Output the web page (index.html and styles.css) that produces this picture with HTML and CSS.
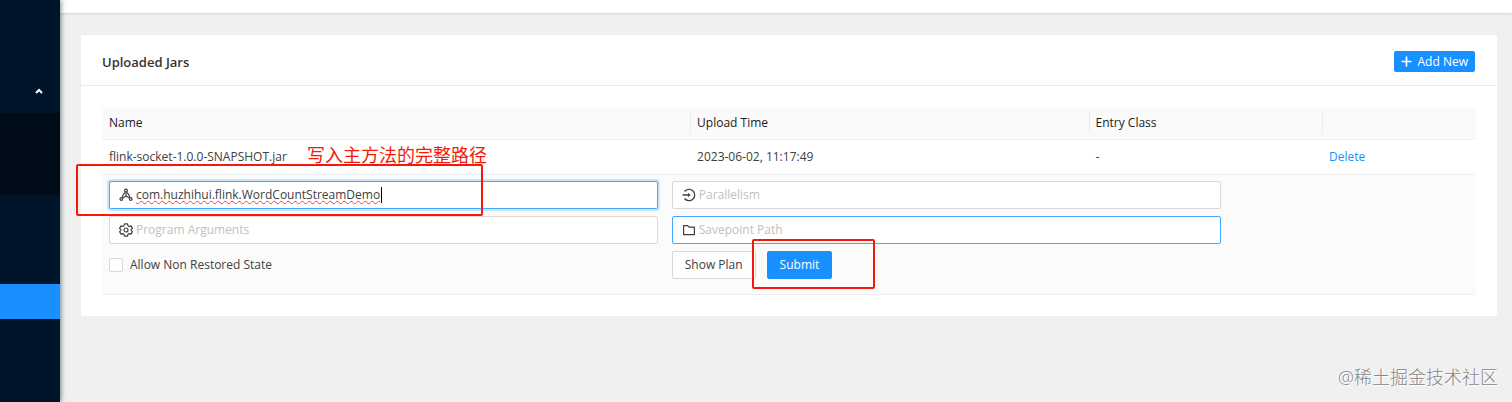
FILE: index.html
```html
<!DOCTYPE html>
<html lang="en">
<head>
    <meta charset="UTF-8">
    <meta name="viewport" content="width=device-width, initial-scale=1.0">
    <title>Uploaded Jars</title>
    <link rel="stylesheet" href="styles.css">
</head>
<body>
    <nav class="sidebar" aria-label="Main menu">
        <div class="menu-head">
            <button class="menu-toggle" type="button" aria-label="Toggle jobs" aria-expanded="true">
                <svg width="8" height="6" viewBox="0 0 8 6"><path d="M1 5l3-3 3 3" fill="none" stroke="currentColor" stroke-width="2"/></svg>
            </button>
        </div>
        <div class="submenu"></div>
        <div class="menu-gap"></div>
        <a class="menu-item active" href="#" aria-label="Submit new job"></a>
    </nav>

    <div class="main">
        <header class="topbar"></header>

        <main class="card">
            <div class="card-head">
                <h1>Uploaded Jars</h1>
                <button class="btn btn-primary btn-small" type="button">
                    <svg width="11" height="11" viewBox="0 0 11 11"><path d="M5.500 0.500v10M0.500 5.500h10" stroke="currentColor" stroke-width="1.700"/></svg>
                    Add New
                </button>
            </div>

            <div class="card-body">
                <table class="jar-table">
                    <colgroup>
                        <col class="col-name">
                        <col class="col-time">
                        <col class="col-entry">
                        <col class="col-action">
                    </colgroup>
                    <thead>
                        <tr>
                            <th>Name</th>
                            <th>Upload Time</th>
                            <th>Entry Class</th>
                            <th></th>
                        </tr>
                    </thead>
                    <tbody>
                        <tr>
                            <td>flink-socket-1.0.0-SNAPSHOT.jar</td>
                            <td>2023-06-02, 11:17:49</td>
                            <td>-</td>
                            <td><a href="#">Delete</a></td>
                        </tr>
                        <tr class="expanded">
                            <td colspan="4">
                                <form class="job-form">
                                    <label class="field focused">
                                        <svg width="14" height="14" viewBox="0 0 14 14" fill="none" stroke="currentColor" stroke-width="1.200"><circle cx="7" cy="2.500" r="1.400"/><circle cx="2.300" cy="11" r="1.300"/><circle cx="11.700" cy="11" r="1.300"/><path d="M7 4v4M7 8l-3.600 2.200M7 8l3.600 2.200M6 4.500C4.800 5.500 3.800 7 3.300 9M8 4.500c1.200 1 2.200 2.500 2.700 4.500"/></svg>
                                        <input class="misspelled" type="text" aria-label="Entry Class" value="com.huzhihui.flink.WordCountStreamDemo" spellcheck="false">
                                        <span class="caret"></span>
                                    </label>
                                    <label class="field">
                                        <svg width="14" height="14" viewBox="0 0 14 14" fill="none" stroke="currentColor" stroke-width="1.300"><path d="M2.500 3.500A5.700 5.700 0 1 1 2.500 10.500M0.500 7h6"/><path d="M6 5l2.800 2L6 9z" fill="currentColor" stroke="none"/></svg>
                                        <input type="text" aria-label="Parallelism" placeholder="Parallelism">
                                    </label>
                                    <label class="field">
                                        <svg width="14" height="14" viewBox="0 0 14 14" fill="none" stroke="currentColor" stroke-width="1.200" stroke-linejoin="round"><path d="M5.500 0.900h3l.5 1.800 1.200.7 1.800-.5 1.400 2.500-1.300 1.300v.6l1.300 1.300-1.400 2.500-1.800-.5-1.200.7-.5 1.800h-3L5 11.300l-1.200-.7-1.800.5L.6 8.600l1.300-1.300v-.6L.6 5.400 2 2.900l1.800.5L5 2.700z"/><circle cx="7" cy="7" r="2"/></svg>
                                        <input type="text" aria-label="Program Arguments" placeholder="Program Arguments">
                                    </label>
                                    <label class="field hovered">
                                        <svg width="14" height="14" viewBox="0 0 14 14" fill="none" stroke="currentColor" stroke-width="1.200"><path d="M1.600 2.600h4l1.600 1.600h5.200v7.500H1.600z"/></svg>
                                        <input type="text" aria-label="Savepoint Path" placeholder="Savepoint Path">
                                    </label>
                                    <label class="check">
                                        <input type="checkbox">
                                        Allow Non Restored State
                                    </label>
                                    <div class="actions">
                                        <button class="btn" type="button">Show Plan</button>
                                        <button class="btn btn-primary" type="submit">Submit</button>
                                    </div>
                                </form>
                            </td>
                        </tr>
                    </tbody>
                </table>
            </div>
        </main>
    </div>

    <!-- Notes drawn over the page -->
    <div class="mark mark-entry"></div>
    <div class="mark mark-submit"></div>
    <div class="note" lang="zh">写入主方法的完整路径</div>
    <div class="watermark" lang="zh">@稀土掘金技术社区</div>
</body>
</html>
```

FILE: styles.css
```css
* {
    box-sizing: border-box;
}

body {
    margin: 0;
    min-height: 100vh;
    display: flex;
    position: relative;
    background-color: #f0f0f0;
    color: #404040;
    font-family: "Open Sans", "Noto Sans CJK SC", sans-serif;
    font-size: 12px;
    line-height: 20px;
}

/* Sidebar */
.sidebar {
    width: 60px;
    flex: none;
    background-color: #001529;
    box-shadow: 1px 0 5px rgba(0, 21, 41, 0.5);
    z-index: 1;
}

.menu-head {
    height: 113px;
    padding: 72px 13px 0 0;
    text-align: right;
}

.menu-toggle {
    width: 16px;
    height: 35px;
    padding: 0;
    border: none;
    background: none;
    color: #fff;
}

.submenu {
    height: 82px;
    background-color: #000c17;
}

.menu-gap {
    height: 89px;
}

.menu-item {
    display: block;
    height: 35px;
}

.menu-item.active {
    background-color: #1890ff;
}

/* Page */
.main {
    flex: 1;
    min-width: 0;
}

.topbar {
    height: 13px;
    background-color: #fff;
    box-shadow: 0 1px 2px rgba(0, 0, 0, 0.12);
}

.card {
    margin: 22px 15px 22px 21px;
    background-color: #fff;
    border-radius: 2px;
}

.card-head {
    display: flex;
    align-items: center;
    justify-content: space-between;
    height: 51px;
    padding: 3px 22px 0 21px;
    border-bottom: 1px solid #ebebeb;
}

h1 {
    margin: 0;
    font-size: 13px;
    font-weight: 600;
    color: #333;
}

.card-body {
    padding: 22px 21px 21px;
}

.btn {
    height: 28px;
    padding: 0 12px;
    border: 1px solid #d9d9d9;
    border-radius: 2px;
    background-color: #fff;
    color: #404040;
    font: inherit;
    cursor: pointer;
}

.btn-primary {
    border-color: #1890ff;
    background-color: #1890ff;
    color: #fff;
}

.btn-small {
    display: flex;
    align-items: center;
    gap: 6px;
    height: 21px;
    padding: 0 6px;
}

/* Table */
.jar-table {
    width: 100%;
    table-layout: fixed;
    border-collapse: separate;
    border-spacing: 0;
}

.col-name {
    width: 42.800%;
}

.col-time {
    width: 29%;
}

.col-entry {
    width: 17%;
}

th, td {
    height: 35px;
    padding: 0 7px;
    text-align: left;
    border-bottom: 1px solid #f0f0f0;
}

th {
    height: 32px;
    padding-bottom: 2px;
    background-color: #fafafa;
    color: #1a1a1a;
    font-weight: 500;
}

/* Short divider between header cells */
th + th {
    background-image: linear-gradient(#ececec, #ececec);
    background-size: 1px 21px;
    background-position: 0 4px;
    background-repeat: no-repeat;
}

td a {
    color: #1890ff;
    text-decoration: none;
}

.expanded td {
    padding: 6px 22px 15px 7px;
    background-color: #fbfbfb;
}

/* Job form */
.job-form {
    display: grid;
    grid-template-columns: 10fr 10fr 4fr;
    gap: 7px 14px;
}

.field {
    position: relative;
    display: flex;
    align-items: center;
    gap: 3px;
    height: 28px;
    padding: 0 9px;
    border: 1px solid #d9d9d9;
    border-radius: 2px;
    background-color: #fff;
}

.field:nth-child(odd), .check {
    grid-column: 1;
}

.field.focused {
    border-color: #40a9ff;
    box-shadow: 0 0 0 2px rgba(24, 144, 255, 0.2);
}

.field.hovered {
    border-color: #40a9ff;
}

.field input {
    flex: 1;
    min-width: 0;
    padding: 0;
    border: none;
    outline: none;
    background: none;
    color: #404040;
    font: inherit;
}

.field input::placeholder {
    color: #bfbfbf;
}

.field .misspelled {
    text-decoration: underline wavy #e8453c 1px;
    text-decoration-skip-ink: none;
}

.caret {
    position: absolute;
    top: 5px;
    left: 271px;
    width: 1px;
    height: 16px;
    background-color: #000;
}

.check {
    display: flex;
    align-items: center;
    gap: 7px;
}

.check input {
    appearance: none;
    width: 14px;
    height: 14px;
    margin: 0;
    border: 1px solid #d9d9d9;
    border-radius: 2px;
    background-color: #fff;
}

.actions {
    display: flex;
    gap: 11px;
}

/* Notes */
.mark {
    position: absolute;
    border: 2px solid #f5190a;
    border-radius: 2px;
    z-index: 2;
}

.mark-entry {
    top: 164px;
    left: 76px;
    width: 407px;
    height: 52px;
}

.mark-submit {
    top: 239px;
    left: 752px;
    width: 123px;
    height: 50px;
}

.note {
    position: absolute;
    top: 142px;
    left: 307px;
    color: #f5190a;
    font-size: 18px;
    line-height: 26px;
}

.watermark {
    position: absolute;
    right: 14px;
    bottom: 12px;
    color: #858585;
    font-size: 18px;
    font-weight: 300;
    line-height: 26px;
    text-shadow: 1px 1px 0 #fff;
}
```
